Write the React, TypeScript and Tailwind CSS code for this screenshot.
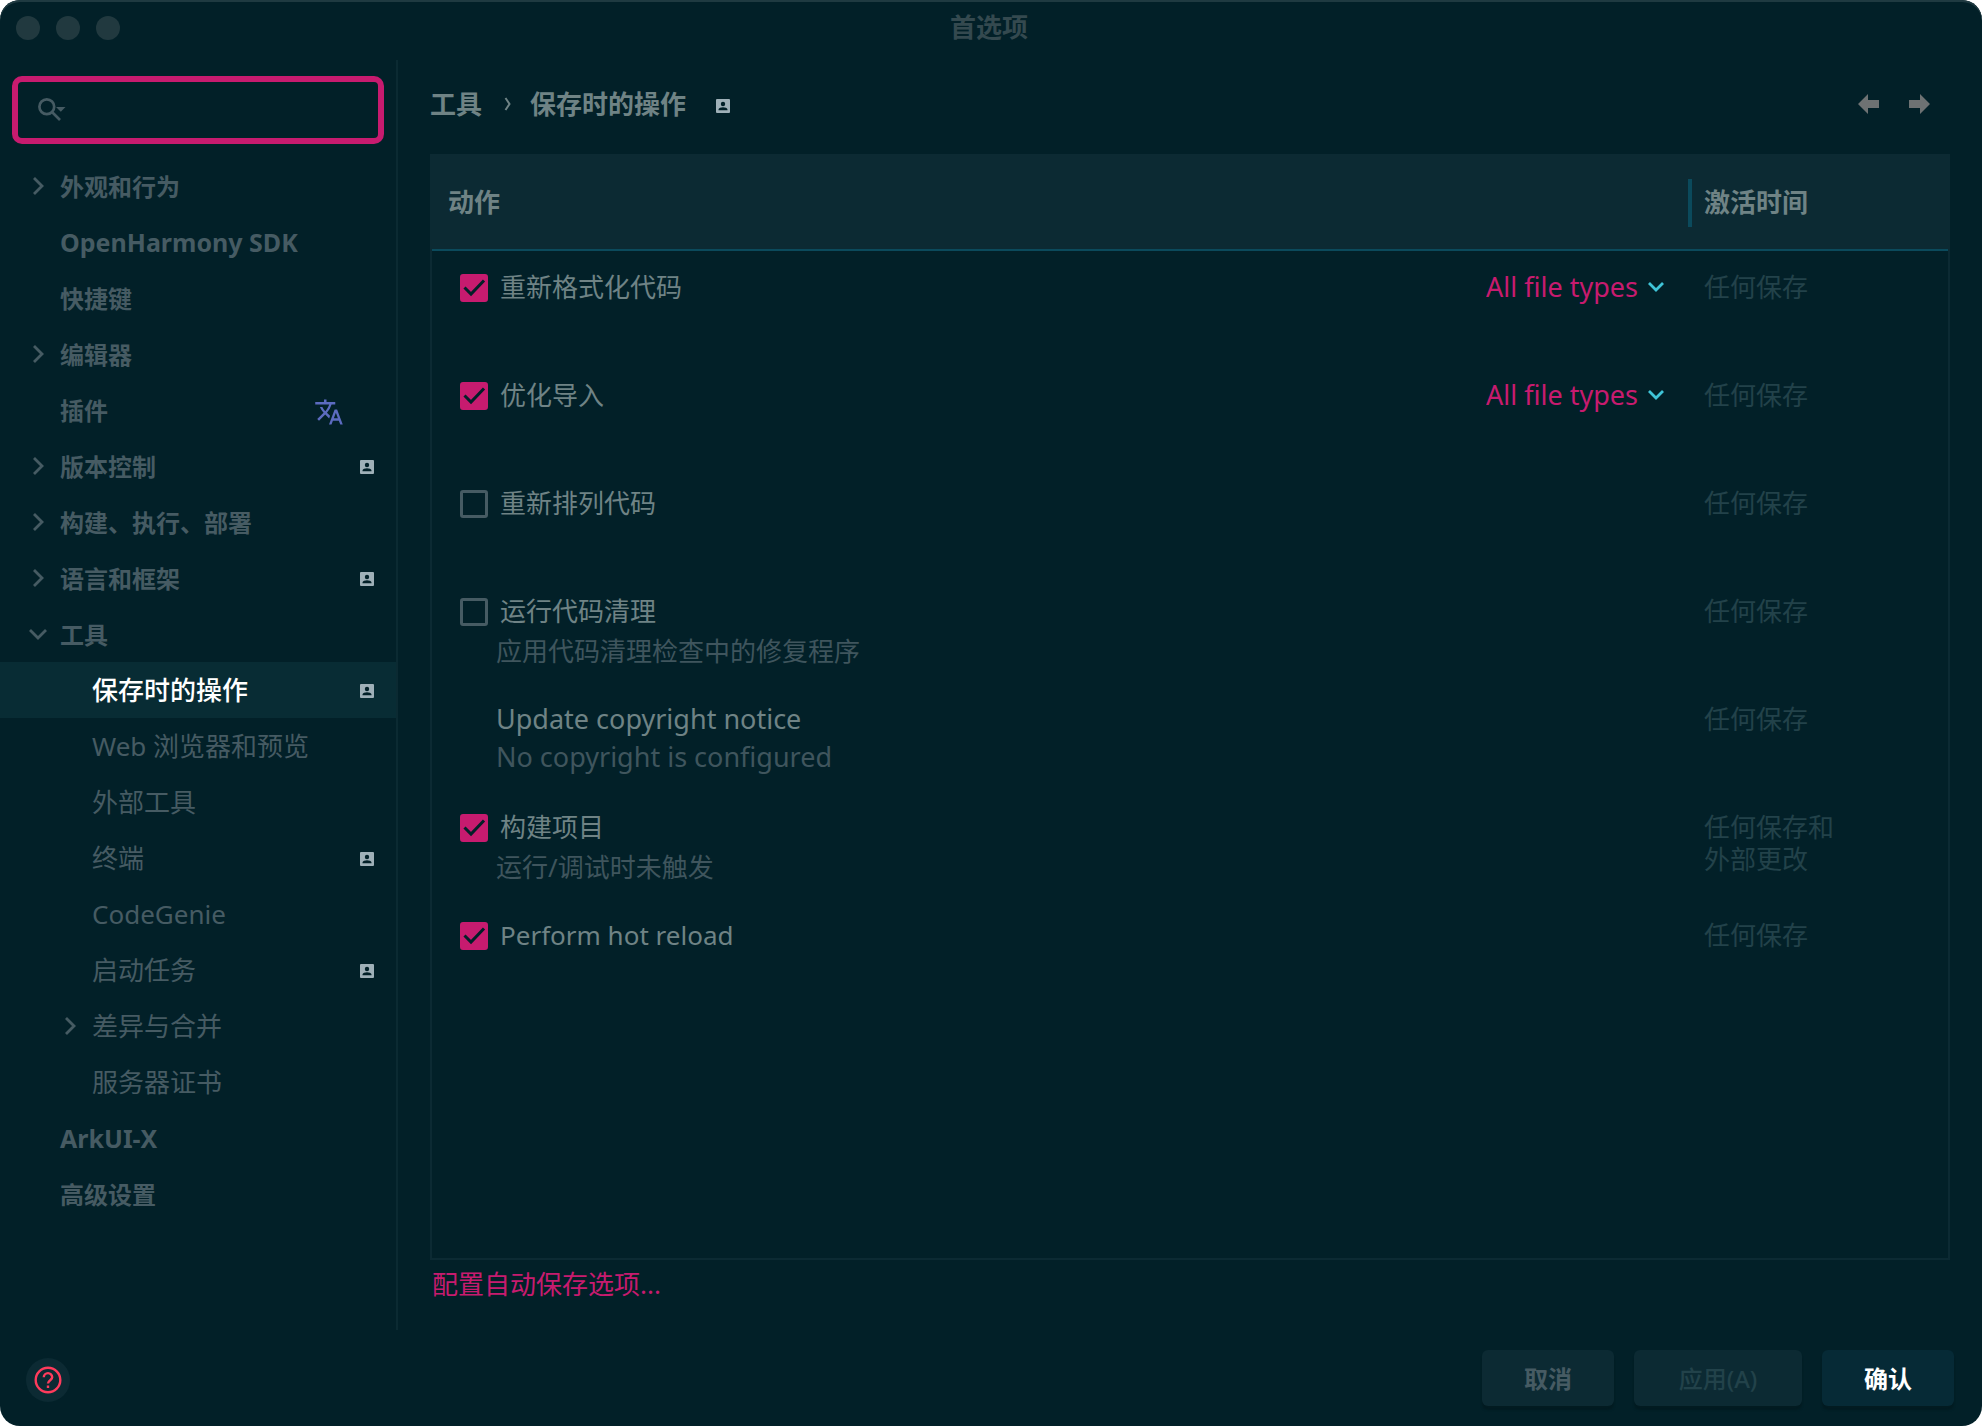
import { MdTranslate } from "react-icons/md";

type TreeItem = {
  label: string;
  level: 1 | 2;
  latin?: boolean;
  arrow?: "right" | "down";
  badge?: boolean;
  translate?: boolean;
  selected?: boolean;
};

const tree: TreeItem[] = [
  { label: "外观和行为", level: 1, arrow: "right" },
  { label: "OpenHarmony SDK", level: 1, latin: true },
  { label: "快捷键", level: 1 },
  { label: "编辑器", level: 1, arrow: "right" },
  { label: "插件", level: 1, translate: true },
  { label: "版本控制", level: 1, arrow: "right", badge: true },
  { label: "构建、执行、部署", level: 1, arrow: "right" },
  { label: "语言和框架", level: 1, arrow: "right", badge: true },
  { label: "工具", level: 1, arrow: "down" },
  { label: "保存时的操作", level: 2, badge: true, selected: true },
  { label: "Web 浏览器和预览", level: 2 },
  { label: "外部工具", level: 2 },
  { label: "终端", level: 2, badge: true },
  { label: "CodeGenie", level: 2 },
  { label: "启动任务", level: 2, badge: true },
  { label: "差异与合并", level: 2, arrow: "right" },
  { label: "服务器证书", level: 2 },
  { label: "ArkUI-X", level: 1, latin: true },
  { label: "高级设置", level: 1 },
];

type Action = {
  id: string;
  title: string;
  note?: string;
  checked?: boolean;
  checkbox: boolean;
  fileTypes?: boolean;
  when: string;
};

const actions: Action[] = [
  { id: "reformat", title: "重新格式化代码", checkbox: true, checked: true, fileTypes: true, when: "任何保存" },
  { id: "imports", title: "优化导入", checkbox: true, checked: true, fileTypes: true, when: "任何保存" },
  { id: "rearrange", title: "重新排列代码", checkbox: true, when: "任何保存" },
  { id: "cleanup", title: "运行代码清理", note: "应用代码清理检查中的修复程序", checkbox: true, when: "任何保存" },
  { id: "copyright", title: "Update copyright notice", note: "No copyright is configured", checkbox: false, when: "任何保存" },
  { id: "build", title: "构建项目", note: "运行/调试时未触发", checkbox: true, checked: true, when: "任何保存和\n外部更改" },
  { id: "reload", title: "Perform hot reload", checkbox: true, checked: true, when: "任何保存" },
];

function Chevron({ dir }: { dir: "right" | "down" }) {
  return (
    <svg
      viewBox="0 0 20 20"
      className={dir === "down" ? "size-5 rotate-90" : "size-5"}
      fill="none"
      stroke="currentColor"
      strokeWidth="2.8"
    >
      <path d="M6 2l8 8-8 8" />
    </svg>
  );
}

function Badge() {
  return (
    <svg viewBox="0 0 14 14" className="mt-[2px] size-[14px] shrink-0">
      <rect width="14" height="14" rx="1" fill="#9fb0b8" />
      <circle cx="7" cy="5" r="2.2" fill="#022028" />
      <path d="M2.5 11.2v-.7c0-1.4 2.7-2.2 4.5-2.2s4.5.8 4.5 2.2v.7z" fill="#022028" />
    </svg>
  );
}

function labelClass(item: TreeItem) {
  if (item.selected) return "flex-1 text-[26px] font-medium";
  if (item.level === 2) return "flex-1 text-[26px]";
  return item.latin ? "flex-1 pt-[2px] text-[25px] font-bold" : "flex-1 pt-[2px] text-2xl font-bold";
}

function TreeRow({ item }: { item: TreeItem }) {
  return (
    <li
      className={
        item.selected
          ? "flex h-14 items-center bg-[#082c34] pr-[22px] text-white"
          : "flex h-14 items-center pr-[22px]"
      }
    >
      <span className={item.level === 1 ? "w-[60px] shrink-0 pl-7" : "w-[92px] shrink-0 pl-[60px]"}>
        {item.arrow && <Chevron dir={item.arrow} />}
      </span>
      <a href="#" className={labelClass(item)}>
        {item.label}
      </a>
      {item.translate && <MdTranslate className="mt-1 mr-[30px] size-[30px] text-[#5c6bc0]" />}
      {item.badge && <Badge />}
    </li>
  );
}

function Sidebar() {
  return (
    <aside className="w-[398px] shrink-0 border-r-2 border-[#0b2a32]">
      <label className="mx-3 mt-4 mb-[14px] flex h-[68px] items-center rounded-[10px] border-[6px] border-[#c71b6f] pl-5">
        <svg viewBox="0 0 28 24" className="h-6 w-7 shrink-0" fill="none" stroke="#465b63" strokeWidth="2.7">
          <circle cx="8.8" cy="8.8" r="7.4" />
          <path d="M14.500 14.500l7.500 7.500" />
          <path d="M18 9h9.500l-4.700 4.700z" fill="#465b63" stroke="none" />
        </svg>
        <input type="text" aria-label="搜索" className="w-full bg-transparent px-3 text-2xl outline-none" />
      </label>
      <ul className="text-[#465b63]">
        {tree.map((item) => (
          <TreeRow key={item.label} item={item} />
        ))}
      </ul>
    </aside>
  );
}

function Checkbox({ id, checked }: { id: string; checked?: boolean }) {
  return (
    <span className="relative mt-[3px] size-7 shrink-0">
      <input
        id={id}
        type="checkbox"
        defaultChecked={checked}
        className="peer block size-7 appearance-none rounded-[3px] border-3 border-[#465b63] checked:border-[#c71b6f] checked:bg-[#c71b6f]"
      />
      <svg
        viewBox="0 0 28 28"
        className="pointer-events-none absolute inset-0 hidden size-7 peer-checked:block"
        fill="none"
        stroke="#022028"
        strokeWidth="3"
      >
        <path d="M4.500 13.500l6.500 6.500L24 6.500" />
      </svg>
    </span>
  );
}

function ActionRow({ action }: { action: Action }) {
  return (
    <tr className="h-[108px] align-top">
      <td className="pt-5 pl-7">
        <div className="flex justify-between">
          <div className="flex">
            {action.checkbox ? (
              <>
                <Checkbox id={action.id} checked={action.checked} />
                <label htmlFor={action.id} className="pl-3 leading-8 text-[#6f8385]">
                  {action.title}
                </label>
              </>
            ) : (
              <span className="pl-9 text-[27px] leading-8 text-[#6f8385]">{action.title}</span>
            )}
          </div>
          {action.fileTypes && (
            <div className="-mt-1 flex items-center gap-2 pr-[22px] text-[27px] text-[#c71b6f]">
              <select aria-label="文件类型" className="h-10 appearance-none bg-transparent leading-10">
                <option>All file types</option>
              </select>
              <svg viewBox="0 0 20 20" className="size-5" fill="none" stroke="#3fc4d8" strokeWidth="2.8">
                <path d="M3 6l7 7 7-7" />
              </svg>
            </div>
          )}
        </div>
        {action.note && (
          <p
            className={
              action.checkbox
                ? "mt-2 pl-9 leading-8 text-[#3f555d]"
                : "mt-[6px] pl-9 text-[27px] leading-8 text-[#3f555d]"
            }
          >
            {action.note}
          </p>
        )}
      </td>
      <td className="pt-5 pl-4 leading-8 whitespace-pre-line text-[#22424a]">{action.when}</td>
    </tr>
  );
}

export default function App() {
  return (
    <div className="bg-white">
      <div
        lang="zh-CN"
        className="flex min-h-screen flex-col overflow-hidden rounded-[20px] bg-[#022028] font-['Noto_Sans','Noto_Sans_CJK_SC',sans-serif] shadow-[inset_0_2px_0_#1f3a41]"
      >
        {/* Title bar */}
        <header className="grid h-[60px] grid-cols-3 items-center pr-5 pb-1 pl-4">
          <div className="flex gap-4">
            <span className="size-6 rounded-full bg-[#21393f]" />
            <span className="size-6 rounded-full bg-[#21393f]" />
            <span className="size-6 rounded-full bg-[#21393f]" />
          </div>
          <h1 className="pb-[2px] text-center text-[26px] leading-8 font-bold text-[#34494f]">首选项</h1>
        </header>

        <div className="flex flex-1">
          <Sidebar />

          <main className="flex flex-1 flex-col px-8 text-[26px]">
            {/* Breadcrumb */}
            <div className="flex h-[94px] items-center justify-between pb-[6px] text-[#6f8385]">
              <nav className="flex items-center font-bold">
                <a href="#">工具</a>
                <svg viewBox="0 0 8 14" className="mr-[18px] ml-[22px] h-[14px] w-2" fill="none" stroke="currentColor" strokeWidth="2">
                  <path d="M1.500 1l4 6-4 6" />
                </svg>
                <a href="#" className="mr-[30px]">保存时的操作</a>
                <span className="pt-[2px]">
                  <Badge />
                </span>
              </nav>
              <div className="flex gap-[30px] pr-5 text-[#6e7273]">
                <button type="button" aria-label="后退">
                  <svg viewBox="0 0 21 20" className="h-5 w-[21px]" fill="currentColor">
                    <path d="M0 10L10 0v6h11v8H10v6z" />
                  </svg>
                </button>
                <button type="button" aria-label="前进">
                  <svg viewBox="0 0 21 20" className="h-5 w-[21px]" fill="currentColor">
                    <path d="M21 10L11 0v6H0v8h11v6z" />
                  </svg>
                </button>
              </div>
            </div>

            <div className="flex-1 border-2 border-[#0c2a33]">
              <table className="w-full table-fixed border-separate border-spacing-0">
                <thead>
                  <tr className="h-[95px] bg-[#0c2a33] text-left text-[#6f8385]">
                    <th className="border-b-2 border-[#0b4a5c] pl-4">动作</th>
                    <th className="w-[260px] border-b-2 border-[#0b4a5c]">
                      <div className="flex h-12 items-center border-l-4 border-[#0b4a5c] pl-3">激活时间</div>
                    </th>
                  </tr>
                </thead>
                <tbody>
                  {actions.map((action) => (
                    <ActionRow key={action.id} action={action} />
                  ))}
                </tbody>
              </table>
            </div>

            <div className="pt-2 pb-[30px] leading-8">
              <a href="#" className="pl-[2px] text-[#c71b6f]">配置自动保存选项...</a>
            </div>
          </main>
        </div>

        {/* Footer */}
        <footer className="flex h-24 items-center justify-between pr-7 pl-[26px] text-2xl font-bold">
          <button type="button" aria-label="帮助" className="mt-1 flex size-11 items-center justify-center rounded-full bg-[#0c2a33]">
            <svg viewBox="0 0 28 28" className="size-7" fill="none" stroke="#ff3b5c" strokeWidth="2.4">
              <circle cx="14" cy="14" r="12.3" />
              <path d="M9.800 11.300a4.200 4.200 0 118.400 0c0 2.800-4.200 3-4.200 6.200" />
              <path d="M14 19.400v2.600" />
            </svg>
          </button>
          <div className="flex gap-5">
            <button type="button" className="h-14 w-[132px] rounded-md bg-[#0c2a33] pt-[2px] text-[#465b63] shadow-[0_4px_2px_#021b21]">
              取消
            </button>
            <button type="button" className="h-14 w-[168px] rounded-md bg-[#0c2a33] pt-[2px] font-medium text-[#22424a] shadow-[0_4px_2px_#021b21]">
              应用(A)
            </button>
            <button type="button" className="h-14 w-[132px] rounded-md bg-[#062a36] pt-[2px] text-white shadow-[0_4px_2px_#021b21]">
              确认
            </button>
          </div>
        </footer>
      </div>
    </div>
  );
}
